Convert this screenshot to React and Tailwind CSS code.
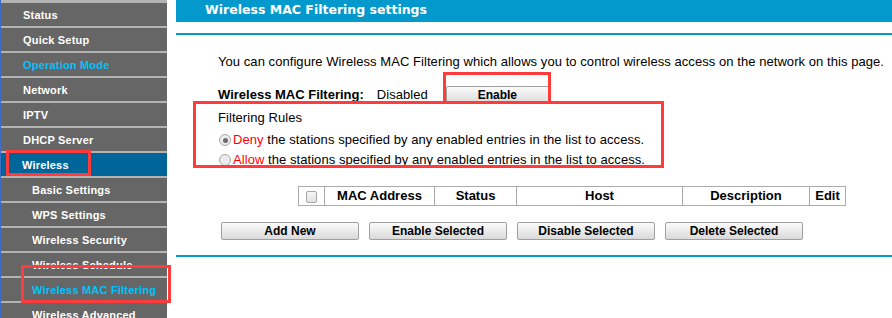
const menu = [
  { label: 'Status' },
  { label: 'Quick Setup' },
  { label: 'Operation Mode', current: true },
  { label: 'Network' },
  { label: 'IPTV' },
  { label: 'DHCP Server' },
  { label: 'Wireless', open: true },
  { label: 'Basic Settings', sub: true },
  { label: 'WPS Settings', sub: true },
  { label: 'Wireless Security', sub: true },
  { label: 'Wireless Schedule', sub: true },
  { label: 'Wireless MAC Filtering', sub: true, current: true },
  { label: 'Wireless Advanced', sub: true },
];

const columns = [
  { key: 'check', w: 'w-[26px]' },
  { key: 'MAC Address', w: 'w-[110px]' },
  { key: 'Status', w: 'w-[82px]' },
  { key: 'Host', w: 'w-[166px]' },
  { key: 'Description', w: 'w-[127px]' },
  { key: 'Edit', w: 'w-[36px]' },
];

const actions = ['Add New', 'Enable Selected', 'Disable Selected', 'Delete Selected'];

function Radio({ checked }) {
  return (
    <span className="w-[12px] h-[12px] rounded-full border border-[#a9a9a9] bg-[#ececec] flex items-center justify-center shrink-0">
      {checked && <span className="w-[5px] h-[5px] rounded-full bg-[#6b6b6b]" />}
    </span>
  );
}

function Sidebar() {
  return (
    <div className="w-[167px] shrink-0 h-full border-l border-[#3f6cc4] bg-[#b3b3b3] pt-[3px] flex flex-col gap-[2px] font-['Liberation_Sans',sans-serif] font-bold text-[11px] tracking-[0.2px]">
      {menu.map(item => (
        <div
          key={item.label}
          className={`h-[23px] shrink-0 leading-[24px] whitespace-nowrap
            ${item.open ? 'bg-[#006699]' : 'bg-[#666666]'}
            ${item.sub ? 'pl-[31px]' : item.open ? 'pl-[21px]' : 'pl-[22px]'}
            ${item.current ? 'text-[#00c3ff]' : 'text-white'}`}
        >
          {item.label}
        </div>
      ))}
    </div>
  );
}

export default function App() {
  return (
    <div className="relative w-[892px] h-[318px] overflow-hidden bg-white flex">
      <Sidebar />

      <div className="flex-1 pl-[9px] font-['Liberation_Sans',sans-serif] text-[13px] text-black">
        {/* Title bar */}
        <div className="h-[22px] bg-[#0399cc] pl-[29px] text-white font-bold text-[12.5px] leading-[20px] font-['DejaVu_Sans',sans-serif]">
          Wireless MAC Filtering settings
        </div>
        <div className="mt-[11px] h-[2px] bg-[#0399cc]" />

        <div className="pl-[42px] tracking-[0.06px]">
          <p className="mt-[17px] leading-[20px] whitespace-nowrap">
            You can configure Wireless MAC Filtering which allows you to control wireless access on the network on this page.
          </p>

          <div className="mt-[14px] h-[18px] flex items-center leading-[18px]">
            <span className="font-bold tracking-normal">Wireless MAC Filtering:</span>
            <span className="ml-[13px]">Disabled</span>
            <button className="ml-[18px] w-[103px] h-[18px] border border-[#a0a0a0] rounded-[2px] bg-linear-to-b from-[#fbfbfb] to-[#dadada] text-[12px] font-bold leading-[16px] tracking-normal">
              Enable
            </button>
          </div>

          <div className="mt-[4px] leading-[20px]">Filtering Rules</div>
          <div className="mt-[2px] h-[20px] flex items-center gap-[2px] pl-[1px] leading-[20px] whitespace-nowrap">
            <Radio checked />
            <span><span className="text-[#ff0000]">Deny</span> the stations specified by any enabled entries in the list to access.</span>
          </div>
          <div className="h-[20px] flex items-center gap-[2px] pl-[1px] leading-[20px] whitespace-nowrap">
            <Radio />
            <span><span className="text-[#ff0000]">Allow</span> the stations specified by any enabled entries in the list to access.</span>
          </div>
        </div>

        {/* Entries table */}
        <div className="mt-[16px] pl-[122px]">
          <table className="border-collapse border border-[#ababab]">
            <thead>
              <tr className="h-[18px]">
                {columns.map(c => (
                  <th key={c.key} className={`${c.w} p-0 border border-[#ababab] font-bold text-[13px] leading-[18px] text-center`}>
                    {c.key === 'check' ? (
                      <span className="inline-block align-middle w-[11px] h-[12px] rounded-[2px] border border-[#a6a6a6] bg-linear-to-b from-[#f6f6f6] to-[#e2e2e2]" />
                    ) : c.key}
                  </th>
                ))}
              </tr>
            </thead>
          </table>
        </div>

        <div className="mt-[16px] pl-[45px] flex gap-[10px]">
          {actions.map(a => (
            <button key={a} className="w-[138px] h-[18px] border border-[#a0a0a0] rounded-[2px] bg-linear-to-b from-[#fbfbfb] to-[#dadada] text-[12px] font-bold leading-[16px]">
              {a}
            </button>
          ))}
        </div>

        <div className="mt-[15px] h-[2px] bg-[#0399cc]" />
      </div>

      {/* Annotation boxes */}
      <div className="absolute left-[6px] top-[150px] w-[85px] h-[26px] border-[3px] border-[#ff3b3b]" />
      <div className="absolute left-[21px] top-[265px] w-[150px] h-[38px] border-[3px] border-[#ff3b3b]" />
      <div className="absolute left-[443px] top-[72px] w-[108px] h-[32px] border-[3px] border-[#ff3b3b]" />
      <div className="absolute left-[193px] top-[101px] w-[471px] h-[67px] border-[3px] border-[#ff3b3b]" />
    </div>
  );
}
